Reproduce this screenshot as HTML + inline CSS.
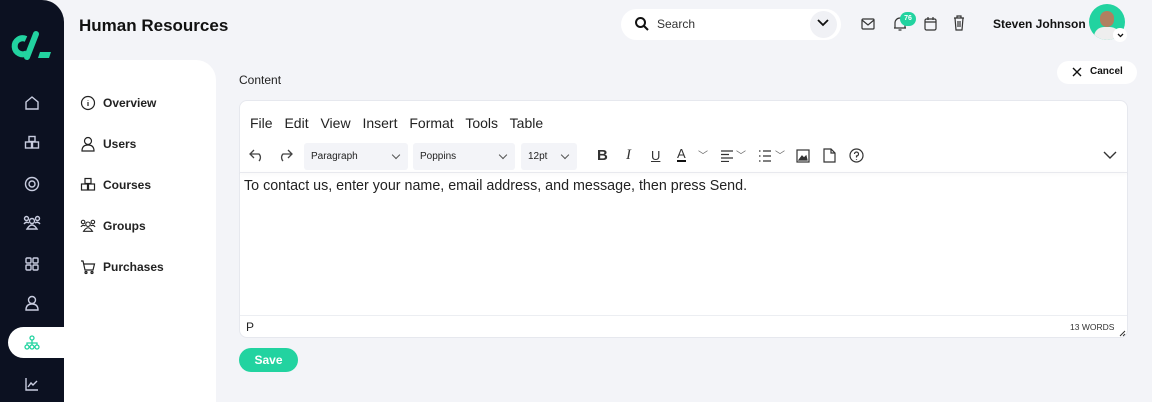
<!DOCTYPE html>
<html><head><meta charset="utf-8"><style>
*{box-sizing:border-box;margin:0;padding:0}
body{width:1152px;height:402px;overflow:hidden;background:#f3f4f8;font-family:"Liberation Sans",sans-serif;position:relative;color:#111}
.abs{position:absolute}
.side{left:0;top:0;width:64px;height:402px;background:#0c1121;border-top-right-radius:22px}
.sub{left:64px;top:60px;width:152px;height:342px;background:#fff;border-top-right-radius:20px}
.nav{left:80px;font-size:12px;font-weight:bold;color:#222;display:flex;align-items:center;gap:7px}
.nav svg{width:16px;height:16px}
.ic{stroke:#c9cde0;fill:none;stroke-width:1.4}
.ed{left:239px;top:100px;width:889px;height:238px;background:#fff;border-radius:8px;border:1px solid #e6e8ee}
.menu{left:10px;top:14px;font-size:14px;color:#222}
.menu span{margin-right:8px}
.sel{top:42px;height:27px;background:#f3f4f8;border-radius:3px;font-size:10px;color:#222;padding:8px 7px}
.sel:after{content:"";position:absolute;right:9px;top:9px;width:5px;height:5px;border-right:1.2px solid #555;border-bottom:1.2px solid #555;transform:rotate(45deg)}
.tb{top:46px;font-size:15px;color:#333}
</style></head><body>
<div class="abs side"></div>
<svg class="abs" style="left:10px;top:30px" width="44" height="32" viewBox="10 30 44 32"><path d="M26 39 A8 8 0 1 0 27 53" fill="none" stroke="#22d3a0" stroke-width="6"/><path d="M36 34 L27 57" stroke="#22d3a0" stroke-width="6" stroke-linecap="round"/><path d="M40 52 H51 L49 58 H38Z" fill="#22d3a0"/></svg>
<svg class="abs ic" style="left:24px;top:95px" width="16" height="16" viewBox="0 0 16 16"><path d="M2 7 L8 2 L14 7 V14 H2Z"/></svg>
<svg class="abs ic" style="left:24px;top:135px" width="16" height="16" viewBox="0 0 16 16"><rect x="5" y="1.5" width="6" height="5"/><rect x="1.5" y="7" width="6" height="6"/><rect x="8.5" y="7" width="6" height="6"/></svg>
<svg class="abs ic" style="left:24px;top:176px" width="16" height="16" viewBox="0 0 16 16"><circle cx="8" cy="8" r="6.5"/><circle cx="8" cy="8" r="3"/></svg>
<svg class="abs ic" style="left:23px;top:215px" width="18" height="16" viewBox="0 0 18 16"><circle cx="9" cy="6" r="2.5"/><circle cx="3.5" cy="3.5" r="2"/><circle cx="14.5" cy="3.5" r="2"/><path d="M4 14 Q9 6 14 14Z M1 9 Q3 6 6 8 M17 9 Q15 6 12 8"/></svg>
<svg class="abs ic" style="left:24px;top:256px" width="16" height="16" viewBox="0 0 16 16"><rect x="2" y="2" width="5" height="5" rx="1"/><rect x="9" y="2" width="5" height="5" rx="1"/><rect x="2" y="9" width="5" height="5" rx="1"/><rect x="9" y="9" width="5" height="5" rx="1"/></svg>
<svg class="abs ic" style="left:24px;top:295px" width="16" height="16" viewBox="0 0 16 16"><circle cx="8" cy="5" r="3.5"/><path d="M2 15 Q2 9 8 9 Q14 9 14 15Z"/></svg>
<div class="abs" style="left:8px;top:327px;width:56px;height:31px;background:#fff;border-radius:16px 0 0 16px"></div>
<svg class="abs" style="left:24px;top:335px" width="16" height="16" viewBox="0 0 16 16" fill="none" stroke="#22d3a0" stroke-width="1.3"><circle cx="8" cy="3" r="2"/><circle cx="3" cy="12" r="2"/><circle cx="8" cy="12" r="2"/><circle cx="13" cy="12" r="2"/><path d="M8 5V10M3 10V8H13V10"/></svg>
<svg class="abs ic" style="left:24px;top:376px" width="16" height="16" viewBox="0 0 16 16"><path d="M2 2V14H14M4 11L7 7L9 9L13 5"/></svg>
<div class="abs" style="left:79px;top:16px;font-size:17px;font-weight:bold;color:#111">Human Resources</div>
<div class="abs sub"></div>
<div class="abs nav" style="top:95px"><svg viewBox="0 0 16 16" fill="none" stroke="#222" stroke-width="1.2"><circle cx="8" cy="8" r="6.5"/><path d="M8 7V11M8 5V5.5"/></svg>Overview</div>
<div class="abs nav" style="top:136px"><svg viewBox="0 0 16 16" fill="none" stroke="#222" stroke-width="1.2"><circle cx="8" cy="5" r="3.5"/><path d="M2 15 Q2 9 8 9 Q14 9 14 15Z"/></svg>Users</div>
<div class="abs nav" style="top:177px"><svg viewBox="0 0 16 16" fill="none" stroke="#222" stroke-width="1.2"><rect x="5" y="1.5" width="6" height="5"/><rect x="1.5" y="7" width="6" height="6"/><rect x="8.5" y="7" width="6" height="6"/></svg>Courses</div>
<div class="abs nav" style="top:218px"><svg viewBox="0 0 18 16" fill="none" stroke="#222" stroke-width="1.2"><circle cx="9" cy="6" r="2.5"/><circle cx="3.5" cy="3.5" r="2"/><circle cx="14.5" cy="3.5" r="2"/><path d="M4 14 Q9 6 14 14Z M1 9 Q3 6 6 8 M17 9 Q15 6 12 8"/></svg>Groups</div>
<div class="abs nav" style="top:259px"><svg viewBox="0 0 16 16" fill="none" stroke="#222" stroke-width="1.2"><path d="M1 2H3L5 11H13L14.5 5H4"/><circle cx="6" cy="13.5" r="1"/><circle cx="12" cy="13.5" r="1"/></svg>Purchases</div>

<div class="abs" style="left:621px;top:9px;width:220px;height:31px;background:#fff;border-radius:16px"></div>
<svg class="abs" style="left:634px;top:16px" width="16" height="16" viewBox="0 0 16 16" fill="none" stroke="#111" stroke-width="2"><circle cx="6.5" cy="6.5" r="4.5"/><path d="M10 10L14 14"/></svg>
<div class="abs" style="left:657px;top:17px;font-size:12px;color:#333">Search</div>
<div class="abs" style="left:810px;top:11px;width:27px;height:27px;border-radius:50%;background:#f0f1f5"></div>
<svg class="abs" style="left:817px;top:19px" width="12" height="8" viewBox="0 0 12 8" fill="none" stroke="#111" stroke-width="1.8"><path d="M1 1L6 6L11 1"/></svg>
<svg class="abs" style="left:861px;top:18px" width="14" height="12" viewBox="0 0 14 12" fill="none" stroke="#333" stroke-width="1.2"><rect x="1" y="1" width="12" height="10" rx="1"/><path d="M1 2L7 7L13 2"/></svg>
<svg class="abs" style="left:893px;top:16px" width="14" height="16" viewBox="0 0 14 16" fill="none" stroke="#333" stroke-width="1.2"><path d="M2 12V7A5 5 0 0 1 12 7V12H2ZM1 12H13M5.5 14H8.5"/></svg>
<div class="abs" style="left:900px;top:12px;width:16px;height:14px;border-radius:8px;background:#22d3a0;color:#fff;font-size:7px;font-weight:bold;text-align:center;line-height:14px">76</div>
<svg class="abs" style="left:924px;top:16px" width="13" height="15" viewBox="0 0 13 15" fill="none" stroke="#333" stroke-width="1.2"><rect x="1" y="3" width="11" height="11" rx="1.5"/><path d="M4 1V4M9 1V4M1 6H12"/></svg>
<svg class="abs" style="left:953px;top:15px" width="12" height="16" viewBox="0 0 12 16" fill="none" stroke="#333" stroke-width="1.2"><path d="M1 3H11M4 3V1H8V3M2 3L3 15H9L10 3M5 6V12M7 6V12"/></svg>
<div class="abs" style="left:993px;top:17px;font-size:12px;font-weight:bold">Steven Johnson</div>
<div class="abs" style="left:1089px;top:4px;width:36px;height:36px;border-radius:50%;background:#22d3a0;overflow:hidden"><div style="position:absolute;left:11px;top:7px;width:14px;height:16px;border-radius:7px;background:#b08060"></div><div style="position:absolute;left:5px;top:23px;width:26px;height:20px;border-radius:10px;background:#eee"></div></div>
<div class="abs" style="left:1113px;top:28px;width:14px;height:14px;border-radius:50%;background:#fff"></div>
<svg class="abs" style="left:1117px;top:33px" width="7" height="5" viewBox="0 0 7 5" fill="none" stroke="#111" stroke-width="1.3"><path d="M1 1L3.5 3.5L6 1"/></svg>

<div class="abs" style="left:1057px;top:61px;width:80px;height:23px;background:#fff;border-radius:12px"></div>
<svg class="abs" style="left:1072px;top:67px" width="10" height="10" viewBox="0 0 10 10" stroke="#111" stroke-width="1.4"><path d="M1 1L9 9M9 1L1 9"/></svg>
<div class="abs" style="left:1090px;top:66px;font-size:10px;font-weight:bold">Cancel</div>
<div class="abs" style="left:239px;top:73px;font-size:12px;color:#222">Content</div>

<div class="abs ed">
 <div class="abs menu"><span>File</span> <span>Edit</span> <span>View</span> <span>Insert</span> <span>Format</span> <span>Tools</span> <span>Table</span></div>
 <svg class="abs" style="left:9px;top:47px" width="16" height="14" viewBox="0 0 16 14" fill="none" stroke="#444" stroke-width="1.3"><path d="M5 2L1 6L5 10M1 6H10A5 5 0 0 1 10 13"/></svg>
 <svg class="abs" style="left:37px;top:47px" width="16" height="14" viewBox="0 0 16 14" fill="none" stroke="#444" stroke-width="1.3"><path d="M11 2L15 6L11 10M15 6H6A5 5 0 0 0 6 13"/></svg>
 <div class="abs sel" style="left:64px;width:104px">Paragraph</div>
 <div class="abs sel" style="left:173px;width:102px">Poppins</div>
 <div class="abs sel" style="left:281px;width:56px">12pt</div>
 <div class="abs tb" style="left:357px;font-weight:bold">B</div>
 <div class="abs tb" style="left:386px;font-style:italic;font-family:'Liberation Serif',serif">I</div>
 <div class="abs tb" style="left:411px;text-decoration:underline;font-size:13px;top:47px">U</div>
 <div class="abs tb" style="left:437px;font-size:13px;top:46px;border-bottom:2.5px solid #111;line-height:13px">A</div>
 <div class="abs" style="left:458px;top:46px;font-size:10px;color:#666">﹀</div>
 <svg class="abs" style="left:480px;top:49px" width="14" height="12" viewBox="0 0 14 12" stroke="#333" stroke-width="1.3"><path d="M1 1H13M1 4.5H9M1 8H13M1 11.5H9"/></svg>
 <div class="abs" style="left:496px;top:46px;font-size:10px;color:#666">﹀</div>
 <svg class="abs" style="left:518px;top:49px" width="14" height="12" viewBox="0 0 14 12" stroke="#333" stroke-width="1.3"><path d="M1 1H2.5M1 6H2.5M1 11H2.5M5 1H13M5 6H13M5 11H13"/></svg>
 <div class="abs" style="left:535px;top:46px;font-size:10px;color:#666">﹀</div>
 <svg class="abs" style="left:556px;top:48px" width="14" height="14" viewBox="0 0 14 14" fill="none" stroke="#333" stroke-width="1.2"><rect x="1" y="1" width="12" height="12"/><path d="M3 11L6 7L8 9L10 7L11 11Z" fill="#333"/></svg>
 <svg class="abs" style="left:583px;top:47px" width="13" height="15" viewBox="0 0 13 15" fill="none" stroke="#333" stroke-width="1.2"><path d="M1 1H8L12 5V14H1Z M8 1V5H12"/></svg>
 <svg class="abs" style="left:609px;top:47px" width="15" height="15" viewBox="0 0 15 15" fill="none" stroke="#333" stroke-width="1.2"><circle cx="7.5" cy="7.5" r="6.5"/><path d="M5.5 6A2 2 0 1 1 7.5 8V9.5M7.5 11V11.8"/></svg>
 <svg class="abs" style="left:863px;top:50px" width="14" height="8" viewBox="0 0 14 8" fill="none" stroke="#333" stroke-width="1.4"><path d="M1 1L7 7L13 1"/></svg>
 <div class="abs" style="left:0;top:71px;width:887px;height:1px;background:#e8e9ee;box-shadow:0 1px 3px rgba(0,0,0,.08)"></div>
 <div class="abs" style="left:4px;top:77px;font-size:14.3px;color:#222">To contact us, enter your name, email address, and message, then press Send.</div>
 <div class="abs" style="left:0;top:214px;width:887px;height:1px;background:#eceef2"></div>
 <div class="abs" style="left:6px;top:219px;font-size:12px;color:#222">P</div>
 <div class="abs" style="left:830px;top:221px;font-size:8.5px;color:#333">13 WORDS</div>
 <svg class="abs" style="left:879px;top:229px" width="7" height="7" viewBox="0 0 7 7" stroke="#333" stroke-width="1"><path d="M1 6L6 1M4 6L6 4"/></svg>
</div>
<div class="abs" style="left:239px;top:348px;width:59px;height:24px;border-radius:12px;background:#22d3a0;color:#fff;font-size:12px;font-weight:bold;text-align:center;line-height:24px">Save</div>
</body></html>
